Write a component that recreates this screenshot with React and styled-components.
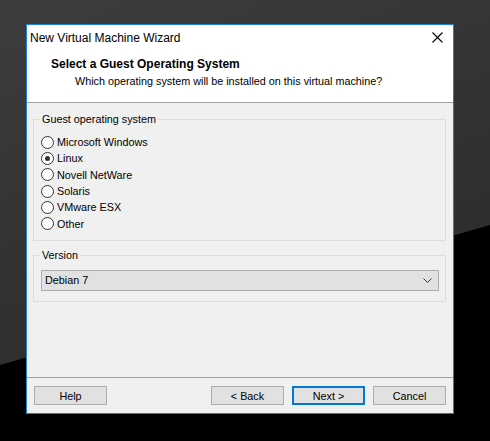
import React from "react";
import styled, { createGlobalStyle } from "styled-components";

const GlobalStyle = createGlobalStyle`
  html, body {
    margin: 0;
    padding: 0;
    width: 490px;
    height: 441px;
    overflow: hidden;
    background: #000;
  }
  * {
    box-sizing: border-box;
  }
`;

const Desktop = styled.div`
  position: relative;
  width: 490px;
  height: 441px;
  padding: 24px 0 0 26px;
  font-family: "Liberation Sans", Arial, sans-serif;
  font-size: 10.8px;
  color: #000;
  &::before {
    content: "";
    position: absolute;
    inset: 0;
    background: linear-gradient(160deg, #3d3d3d 0%, #333 40%, #272727 100%);
    clip-path: polygon(0 0, 100% 0, 100% 225px, 0 365px);
  }
`;

const Window = styled.div`
  position: relative;
  width: 428px;
  height: 390px;
  border: 1px solid #1883d7;
  background: #f0f0f0;
  display: flex;
  flex-direction: column;
`;

const TitleBar = styled.div`
  height: 24px;
  background: #fff;
  display: flex;
  align-items: center;
  justify-content: space-between;
  padding: 1px 10px 0 3px;
  font-size: 12px;
`;

const Header = styled.div`
  background: #fff;
  height: 54px;
  border-bottom: 1px solid #a0a0a0;
  padding: 8px 0 0 24px;
  h1 {
    margin: 0;
    font-size: 12px;
    font-weight: 700;
    line-height: 15px;
  }
  p {
    margin: 2px 0 0 24px;
    font-size: 10.8px;
    line-height: 15px;
    color: #000;
  }
`;

const Body = styled.div`
  flex: 1;
  padding: 10px 7px 0 6px;
  display: flex;
  flex-direction: column;
  gap: 8px;
`;

const Group = styled.fieldset`
  margin: 0;
  border: 1px solid #dcdcdc;
  padding: ${(p) => p.$pad};
  legend {
    padding: 0 2px;
    margin-left: -1px;
    font-size: 10.8px;
    line-height: 13px;
  }
`;

const RadioList = styled.div`
  display: flex;
  flex-direction: column;
`;

const RadioRow = styled.label`
  display: flex;
  align-items: center;
  height: 16.3px;
  gap: 3px;
`;

const Circle = styled.span`
  width: 13px;
  height: 13px;
  border-radius: 50%;
  border: 1px solid #333;
  background: #fff;
  display: flex;
  align-items: center;
  justify-content: center;
  &::after {
    content: "";
    width: 5px;
    height: 5px;
    border-radius: 50%;
    background: ${(p) => (p.$on ? "#333" : "transparent")};
  }
`;

const Select = styled.div`
  height: 21px;
  border: 1px solid #adadad;
  background: #e1e1e1;
  display: flex;
  align-items: center;
  justify-content: space-between;
  padding: 0 6px 0 3px;
`;

const Footer = styled.div`
  border-top: 1px solid #a0a0a0;
  height: 36px;
  display: flex;
  align-items: flex-start;
  padding: 8px 7px 0 7px;
  gap: 8px;
`;

const Button = styled.button`
  width: 73px;
  height: 19px;
  margin: 0;
  padding: 0;
  background: #e1e1e1;
  border: ${(p) => (p.$primary ? "2px solid #0078d7" : "1px solid #adadad")};
  font-family: inherit;
  font-size: 10.8px;
  color: #000;
  margin-left: ${(p) => p.$push || 0};
`;

const systems = [
  "Microsoft Windows",
  "Linux",
  "Novell NetWare",
  "Solaris",
  "VMware ESX",
  "Other",
];

export default function App() {
  return (
    <>
      <GlobalStyle />
      <Desktop>
        <Window>
          <TitleBar>
            <span>New Virtual Machine Wizard</span>
            <svg width="11" height="11" viewBox="0 0 11 11">
              <path d="M0.5 0.5 L10.5 10.5 M10.5 0.5 L0.5 10.5" stroke="#000" strokeWidth="1.1" />
            </svg>
          </TitleBar>
          <Header>
            <h1>Select a Guest Operating System</h1>
            <p>Which operating system will be installed on this virtual machine?</p>
          </Header>
          <Body>
            <Group $pad="8px 7px 8px 7px">
              <legend>Guest operating system</legend>
              <RadioList>
                {systems.map((s) => (
                  <RadioRow key={s}>
                    <Circle $on={s === "Linux"} />
                    {s}
                  </RadioRow>
                ))}
              </RadioList>
            </Group>
            <Group $pad="8px 6px 10px 7px">
              <legend>Version</legend>
              <Select>
                <span>Debian 7</span>
                <svg width="9" height="5" viewBox="0 0 9 5">
                  <path d="M0.5 0.5 L4.5 4.5 L8.5 0.5" stroke="#333" fill="none" />
                </svg>
              </Select>
            </Group>
          </Body>
          <Footer>
            <Button>Help</Button>
            <Button $push="96px">&lt; Back</Button>
            <Button $primary>Next &gt;</Button>
            <Button>Cancel</Button>
          </Footer>
        </Window>
      </Desktop>
    </>
  );
}
